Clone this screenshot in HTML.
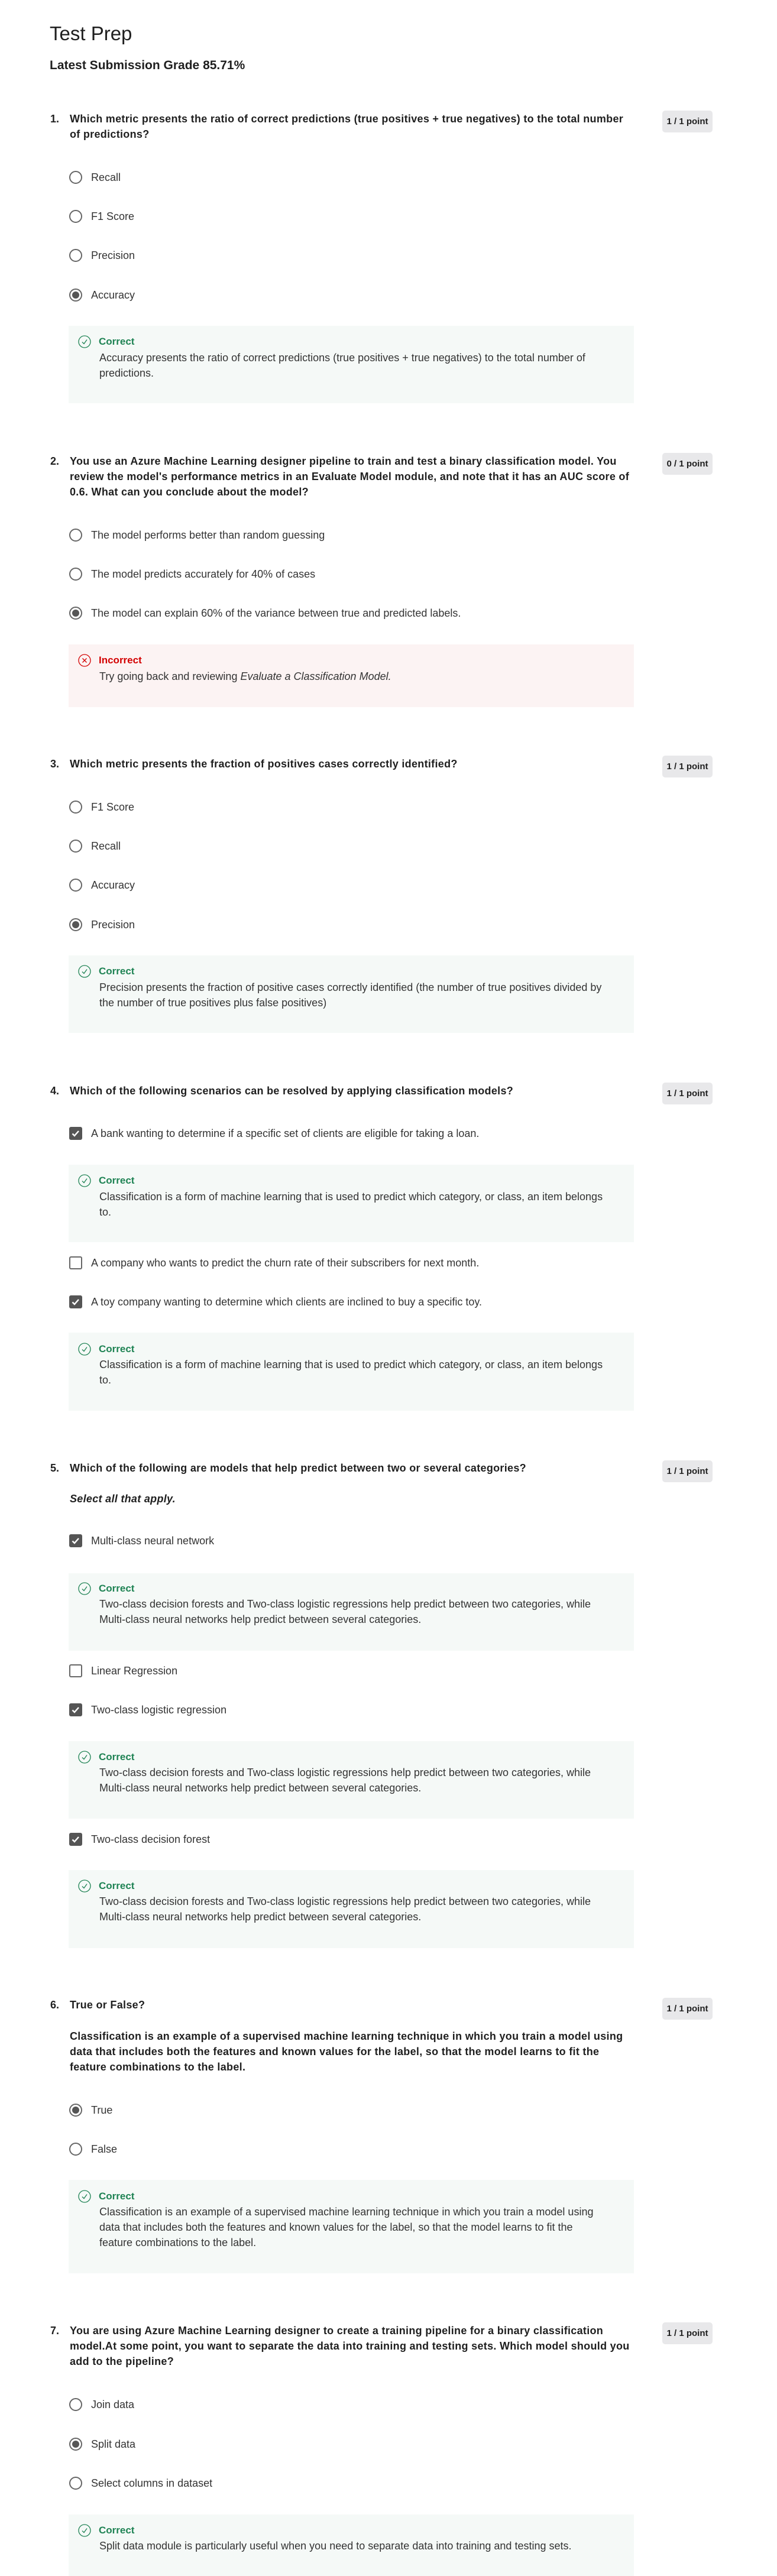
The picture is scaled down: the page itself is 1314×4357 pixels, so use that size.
<!DOCTYPE html>
<html><head><meta charset="utf-8">
<style>
*{margin:0;padding:0;box-sizing:border-box}
html,body{width:1314px;height:4357px;background:#fff;overflow:hidden}
body{position:relative;font-family:"Liberation Sans",Arial,sans-serif;color:#1f1f1f}
.a{position:absolute;white-space:nowrap}
.q{font-size:18px;font-weight:bold;line-height:26px;left:118px;color:#1f1f1f;letter-spacing:0.3px}
.n{font-size:18px;font-weight:bold;line-height:26px;left:85px;color:#1f1f1f}
.bd{left:1120px;width:85px;height:37px;background:#e8e8ea;border-radius:5px;font-size:15px;font-weight:bold;line-height:37px;text-align:center;color:#1f1f1f}
.o{font-size:18px;line-height:26px;left:154px;color:#333}
.r{left:117px;width:22px;height:22px;border:2px solid #666;border-radius:50%}
.r.on::after{content:"";position:absolute;left:3px;top:3px;width:12px;height:12px;border-radius:50%;background:#555}
.c{left:117px;width:22px;height:22px;border:2px solid #666;border-radius:3px}
.c.on{background:#555;border-color:#555}
.fb{left:116px;width:956px;background:#f5f9f7}
.fb.bad{background:#fcf3f3}
.fl{font-size:17px;font-weight:bold;line-height:26px;left:167px;color:#1f8354}
.fl.bad{color:#d30000}
.ft{font-size:18px;line-height:26px;left:168px;color:#333}
.ic{left:132px;width:22px;height:22px}
</style></head><body>

<div class="a" style="left:84px;top:37px;font-size:33px;line-height:40px;color:#1f1f1f">Test Prep</div>
<div class="a" style="left:84px;top:98px;font-size:21px;font-weight:bold;line-height:26px;color:#1f1f1f">Latest Submission Grade 85.71%</div>

<!-- Q1 -->
<div class="a n" style="top:188px">1.</div>
<div class="a q" style="top:188px">Which metric presents the ratio of correct predictions (true positives + true negatives) to the total number<br>of predictions?</div>
<div class="a bd" style="top:187px">1 / 1 point</div>
<div class="a r" style="top:289px"></div><div class="a o" style="top:287px">Recall</div>
<div class="a r" style="top:355px"></div><div class="a o" style="top:353px">F1 Score</div>
<div class="a r" style="top:421px"></div><div class="a o" style="top:419px">Precision</div>
<div class="a r on" style="top:488px"></div><div class="a o" style="top:486px">Accuracy</div>
<div class="a fb" style="top:551px;height:131px"></div>
<svg class="a ic" style="top:567px" viewBox="0 0 22 22"><circle cx="11" cy="11" r="10" fill="none" stroke="#1f8354" stroke-width="1.3"/><path d="M7 11.5l3 3 5-7" fill="none" stroke="#1f8354" stroke-width="1.3"/></svg>
<div class="a fl" style="top:565px">Correct</div>
<div class="a ft" style="top:592px">Accuracy presents the ratio of correct predictions (true positives + true negatives) to the total number of<br>predictions.</div>

<!-- Q2 -->
<div class="a n" style="top:767px">2.</div>
<div class="a q" style="top:767px">You use an Azure Machine Learning designer pipeline to train and test a binary classification model. You<br>review the model's performance metrics in an Evaluate Model module, and note that it has an AUC score of<br>0.6. What can you conclude about the model?</div>
<div class="a bd" style="top:766px">0 / 1 point</div>
<div class="a r" style="top:894px"></div><div class="a o" style="top:892px">The model performs better than random guessing</div>
<div class="a r" style="top:960px"></div><div class="a o" style="top:958px">The model predicts accurately for 40% of cases</div>
<div class="a r on" style="top:1026px"></div><div class="a o" style="top:1024px">The model can explain 60% of the variance between true and predicted labels.</div>
<div class="a fb bad" style="top:1090px;height:106px"></div>
<svg class="a ic" style="top:1106px" viewBox="0 0 22 22"><circle cx="11" cy="11" r="10" fill="none" stroke="#d30000" stroke-width="1.3"/><path d="M7.5 7.5l7 7M14.5 7.5l-7 7" fill="none" stroke="#d30000" stroke-width="1.3"/></svg>
<div class="a fl bad" style="top:1104px">Incorrect</div>
<div class="a ft" style="top:1131px">Try going back and reviewing <i>Evaluate a Classification Model.</i></div>

<!-- Q3 -->
<div class="a n" style="top:1279px">3.</div>
<div class="a q" style="top:1279px">Which metric presents the fraction of positives cases correctly identified?</div>
<div class="a bd" style="top:1278px">1 / 1 point</div>
<div class="a r" style="top:1354px"></div><div class="a o" style="top:1352px">F1 Score</div>
<div class="a r" style="top:1420px"></div><div class="a o" style="top:1418px">Recall</div>
<div class="a r" style="top:1486px"></div><div class="a o" style="top:1484px">Accuracy</div>
<div class="a r on" style="top:1553px"></div><div class="a o" style="top:1551px">Precision</div>
<div class="a fb" style="top:1616px;height:131px"></div>
<svg class="a ic" style="top:1632px" viewBox="0 0 22 22"><circle cx="11" cy="11" r="10" fill="none" stroke="#1f8354" stroke-width="1.3"/><path d="M7 11.5l3 3 5-7" fill="none" stroke="#1f8354" stroke-width="1.3"/></svg>
<div class="a fl" style="top:1630px">Correct</div>
<div class="a ft" style="top:1657px">Precision presents the fraction of positive cases correctly identified (the number of true positives divided by<br>the number of true positives plus false positives)</div>

<!-- Q4 -->
<div class="a n" style="top:1832px">4.</div>
<div class="a q" style="top:1832px">Which of the following scenarios can be resolved by applying classification models?</div>
<div class="a bd" style="top:1831px">1 / 1 point</div>
<svg class="a c on" style="top:1906px" viewBox="0 0 18 18"><path d="M3.5 9.5l3.5 3.5 7-8" fill="none" stroke="#fff" stroke-width="2.4"/></svg>
<div class="a o" style="top:1904px">A bank wanting to determine if a specific set of clients are eligible for taking a loan.</div>
<div class="a fb" style="top:1970px;height:131px"></div>
<svg class="a ic" style="top:1986px" viewBox="0 0 22 22"><circle cx="11" cy="11" r="10" fill="none" stroke="#1f8354" stroke-width="1.3"/><path d="M7 11.5l3 3 5-7" fill="none" stroke="#1f8354" stroke-width="1.3"/></svg>
<div class="a fl" style="top:1984px">Correct</div>
<div class="a ft" style="top:2011px">Classification is a form of machine learning that is used to predict which category, or class, an item belongs<br>to.</div>
<div class="a c" style="top:2125px"></div>
<div class="a o" style="top:2123px">A company who wants to predict the churn rate of their subscribers for next month.</div>
<svg class="a c on" style="top:2191px" viewBox="0 0 18 18"><path d="M3.5 9.5l3.5 3.5 7-8" fill="none" stroke="#fff" stroke-width="2.4"/></svg>
<div class="a o" style="top:2189px">A toy company wanting to determine which clients are inclined to buy a specific toy.</div>
<div class="a fb" style="top:2254px;height:132px"></div>
<svg class="a ic" style="top:2271px" viewBox="0 0 22 22"><circle cx="11" cy="11" r="10" fill="none" stroke="#1f8354" stroke-width="1.3"/><path d="M7 11.5l3 3 5-7" fill="none" stroke="#1f8354" stroke-width="1.3"/></svg>
<div class="a fl" style="top:2269px">Correct</div>
<div class="a ft" style="top:2295px">Classification is a form of machine learning that is used to predict which category, or class, an item belongs<br>to.</div>

<!-- Q5 -->
<div class="a n" style="top:2470px">5.</div>
<div class="a q" style="top:2470px">Which of the following are models that help predict between two or several categories?</div>
<div class="a bd" style="top:2470px">1 / 1 point</div>
<div class="a q" style="top:2522px;font-style:italic">Select all that apply.</div>
<svg class="a c on" style="top:2595px" viewBox="0 0 18 18"><path d="M3.5 9.5l3.5 3.5 7-8" fill="none" stroke="#fff" stroke-width="2.4"/></svg>
<div class="a o" style="top:2593px">Multi-class neural network</div>
<div class="a fb" style="top:2661px;height:131px"></div>
<svg class="a ic" style="top:2676px" viewBox="0 0 22 22"><circle cx="11" cy="11" r="10" fill="none" stroke="#1f8354" stroke-width="1.3"/><path d="M7 11.5l3 3 5-7" fill="none" stroke="#1f8354" stroke-width="1.3"/></svg>
<div class="a fl" style="top:2674px">Correct</div>
<div class="a ft" style="top:2700px">Two-class decision forests and Two-class logistic regressions help predict between two categories, while<br>Multi-class neural networks help predict between several categories.</div>
<div class="a c" style="top:2815px"></div>
<div class="a o" style="top:2813px">Linear Regression</div>
<svg class="a c on" style="top:2881px" viewBox="0 0 18 18"><path d="M3.5 9.5l3.5 3.5 7-8" fill="none" stroke="#fff" stroke-width="2.4"/></svg>
<div class="a o" style="top:2879px">Two-class logistic regression</div>
<div class="a fb" style="top:2945px;height:131px"></div>
<svg class="a ic" style="top:2961px" viewBox="0 0 22 22"><circle cx="11" cy="11" r="10" fill="none" stroke="#1f8354" stroke-width="1.3"/><path d="M7 11.5l3 3 5-7" fill="none" stroke="#1f8354" stroke-width="1.3"/></svg>
<div class="a fl" style="top:2959px">Correct</div>
<div class="a ft" style="top:2985px">Two-class decision forests and Two-class logistic regressions help predict between two categories, while<br>Multi-class neural networks help predict between several categories.</div>
<svg class="a c on" style="top:3100px" viewBox="0 0 18 18"><path d="M3.5 9.5l3.5 3.5 7-8" fill="none" stroke="#fff" stroke-width="2.4"/></svg>
<div class="a o" style="top:3098px">Two-class decision forest</div>
<div class="a fb" style="top:3163px;height:132px"></div>
<svg class="a ic" style="top:3179px" viewBox="0 0 22 22"><circle cx="11" cy="11" r="10" fill="none" stroke="#1f8354" stroke-width="1.3"/><path d="M7 11.5l3 3 5-7" fill="none" stroke="#1f8354" stroke-width="1.3"/></svg>
<div class="a fl" style="top:3177px">Correct</div>
<div class="a ft" style="top:3203px">Two-class decision forests and Two-class logistic regressions help predict between two categories, while<br>Multi-class neural networks help predict between several categories.</div>

<!-- Q6 -->
<div class="a n" style="top:3378px">6.</div>
<div class="a q" style="top:3378px">True or False?</div>
<div class="a bd" style="top:3379px">1 / 1 point</div>
<div class="a q" style="top:3431px">Classification is an example of a supervised machine learning technique in which you train a model using<br>data that includes both the features and known values for the label, so that the model learns to fit the<br>feature combinations to the label.</div>
<div class="a r on" style="top:3558px"></div><div class="a o" style="top:3556px">True</div>
<div class="a r" style="top:3624px"></div><div class="a o" style="top:3622px">False</div>
<div class="a fb" style="top:3687px;height:158px"></div>
<svg class="a ic" style="top:3704px" viewBox="0 0 22 22"><circle cx="11" cy="11" r="10" fill="none" stroke="#1f8354" stroke-width="1.3"/><path d="M7 11.5l3 3 5-7" fill="none" stroke="#1f8354" stroke-width="1.3"/></svg>
<div class="a fl" style="top:3702px">Correct</div>
<div class="a ft" style="top:3728px">Classification is an example of a supervised machine learning technique in which you train a model using<br>data that includes both the features and known values for the label, so that the model learns to fit the<br>feature combinations to the label.</div>

<!-- Q7 -->
<div class="a n" style="top:3929px">7.</div>
<div class="a q" style="top:3929px">You are using Azure Machine Learning designer to create a training pipeline for a binary classification<br>model.At some point, you want to separate the data into training and testing sets. Which model should you<br>add to the pipeline?</div>
<div class="a bd" style="top:3928px">1 / 1 point</div>
<div class="a r" style="top:4056px"></div><div class="a o" style="top:4054px">Join data</div>
<div class="a r on" style="top:4123px"></div><div class="a o" style="top:4121px">Split data</div>
<div class="a r" style="top:4189px"></div><div class="a o" style="top:4187px">Select columns in dataset</div>
<div class="a fb" style="top:4253px;height:110px"></div>
<svg class="a ic" style="top:4269px" viewBox="0 0 22 22"><circle cx="11" cy="11" r="10" fill="none" stroke="#1f8354" stroke-width="1.3"/><path d="M7 11.5l3 3 5-7" fill="none" stroke="#1f8354" stroke-width="1.3"/></svg>
<div class="a fl" style="top:4267px">Correct</div>
<div class="a ft" style="top:4293px">Split data module is particularly useful when you need to separate data into training and testing sets.</div>

</body></html>
